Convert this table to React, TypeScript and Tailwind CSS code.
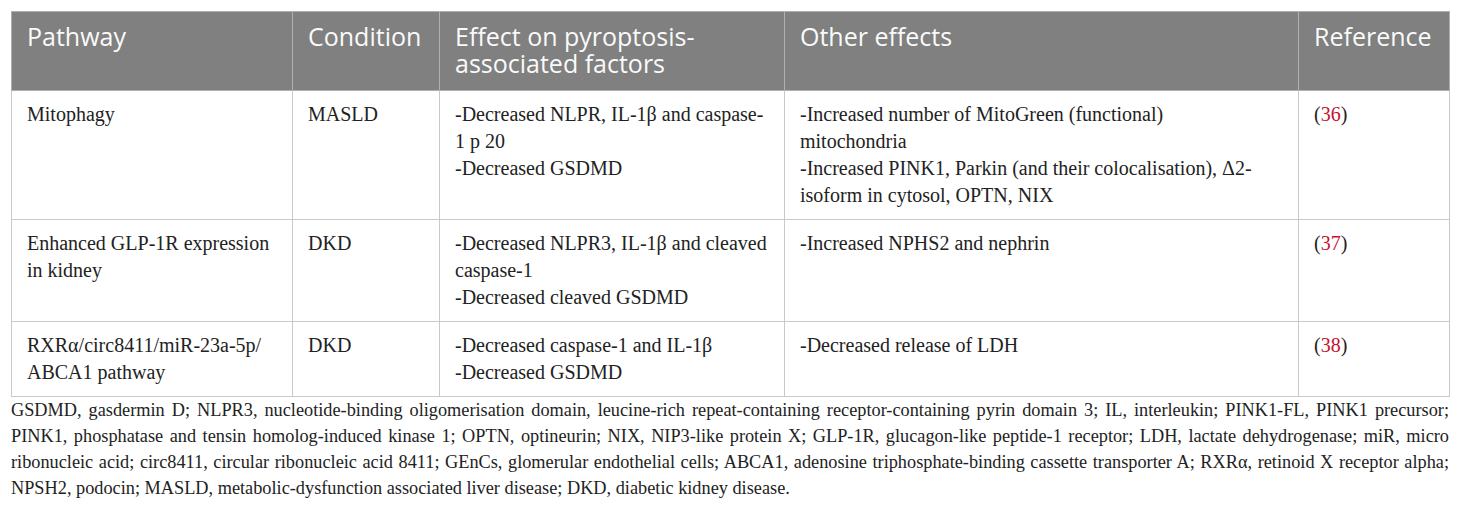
const HEAD = ["Pathway", "Condition", "Effect on pyroptosis-|associated factors", "Other effects", "Reference"];

const ROWS = [
  {
    pathway: ["Mitophagy"],
    condition: "MASLD",
    effect: ["-Decreased NLPR, IL-1β and caspase-", "1 p 20", "-Decreased GSDMD"],
    other: [
      "-Increased number of MitoGreen (functional)",
      "mitochondria",
      "-Increased PINK1, Parkin (and their colocalisation), Δ2-",
      "isoform in cytosol, OPTN, NIX",
    ],
    ref: "36",
  },
  {
    pathway: ["Enhanced GLP-1R expression", "in kidney"],
    condition: "DKD",
    effect: ["-Decreased NLPR3, IL-1β and cleaved", "caspase-1", "-Decreased cleaved GSDMD"],
    other: ["-Increased NPHS2 and nephrin"],
    ref: "37",
  },
  {
    pathway: ["RXRα/circ8411/miR-23a-5p/", "ABCA1 pathway"],
    condition: "DKD",
    effect: ["-Decreased caspase-1 and IL-1β", "-Decreased GSDMD"],
    other: ["-Decreased release of LDH"],
    ref: "38",
  },
];

const NOTES = [
  "GSDMD, gasdermin D; NLPR3, nucleotide-binding oligomerisation domain, leucine-rich repeat-containing receptor-containing pyrin domain 3; IL, interleukin; PINK1-FL, PINK1 precursor;",
  "PINK1, phosphatase and tensin homolog-induced kinase 1; OPTN, optineurin; NIX, NIP3-like protein X; GLP-1R, glucagon-like peptide-1 receptor; LDH, lactate dehydrogenase; miR, micro",
  "ribonucleic acid; circ8411, circular ribonucleic acid 8411; GEnCs, glomerular endothelial cells; ABCA1, adenosine triphosphate-binding cassette transporter A; RXRα, retinoid X receptor alpha;",
];

function Lines({ lines }: { lines: string[] }) {
  return (
    <>
      {lines.map((l, i) => (
        <div key={i} className="whitespace-nowrap">
          {l}
        </div>
      ))}
    </>
  );
}

export default function App() {
  const widths = ["w-[281px]", "w-[147px]", "w-[345px]", "w-[514px]", "w-[151px]"];
  return (
    <div className="w-[1460px] h-[510px] bg-white px-[11px] pt-[11px]">
      <table className="w-[1438px] table-fixed border-collapse border border-[#c9c9c9]">
        <thead>
          <tr className="bg-[#7f807f]">
            {HEAD.map((h, i) => (
              <th
                key={i}
                className={`${widths[i]} border border-[#b0b0b0] px-[15px] pt-[11px] pb-[13px] text-left align-top font-normal text-[25px] leading-[27px] text-[#fafafa] [font-family:'Open_Sans',sans-serif]`}
              >
                <Lines lines={h.split("|")} />
              </th>
            ))}
          </tr>
        </thead>
        <tbody className="text-[20px] leading-[27px] text-[#222] [font-family:'Liberation_Serif',serif]">
          {ROWS.map((r, i) => (
            <tr key={i}>
              <td className="border border-[#c9c9c9] px-[15px] pt-[10px] pb-[10px] align-top">
                <Lines lines={r.pathway} />
              </td>
              <td className="border border-[#c9c9c9] px-[15px] pt-[10px] pb-[10px] align-top">
                {r.condition}
              </td>
              <td className="border border-[#c9c9c9] px-[15px] pt-[10px] pb-[10px] align-top">
                <Lines lines={r.effect} />
              </td>
              <td className="border border-[#c9c9c9] px-[15px] pt-[10px] pb-[10px] align-top">
                <Lines lines={r.other} />
              </td>
              <td className="border border-[#c9c9c9] px-[15px] pt-[10px] pb-[10px] align-top">
                (<span className="text-[#c4122f]">{r.ref}</span>)
              </td>
            </tr>
          ))}
        </tbody>
      </table>
      <div className="w-[1438px] text-[18.3px] leading-[26px] text-[#222] [font-family:'Liberation_Serif',serif]">
        {NOTES.map((n, i) => (
          <div key={i} className="whitespace-nowrap text-justify [text-align-last:justify]">
            {n}
          </div>
        ))}
        <div>NPSH2, podocin; MASLD, metabolic-dysfunction associated liver disease; DKD, diabetic kidney disease.</div>
      </div>
    </div>
  );
}
